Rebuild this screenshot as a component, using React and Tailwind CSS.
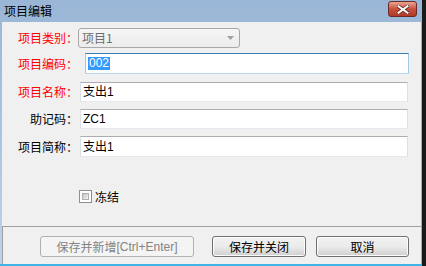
const cjk = { fontFamily: '"Noto Sans CJK SC", "Liberation Sans", sans-serif' }
const latin = { fontFamily: '"Liberation Sans", "Noto Sans CJK SC", sans-serif' }

function TextBox({ value, className = '' }) {
  return (
    <div
      className={`flex items-center h-[20px] w-[328px] bg-white border border-[#dbdfe6] border-t-[#abadb3] border-b-[#e3e9ef] pl-[2px] text-[12px] text-black ${className}`}
      style={latin}
    >
      {value}
    </div>
  )
}

function Button({ children, disabled, className = '' }) {
  if (disabled) {
    return (
      <div
        className={`flex items-center justify-center h-[21px] rounded-[3px] border border-[#adb2b5] bg-[#f4f4f4] text-[12px] text-[#838383] ${className}`}
        style={cjk}
      >
        {children}
      </div>
    )
  }
  return (
    <div
      className={`flex items-center justify-center h-[21px] rounded-[3px] border border-[#707070] bg-gradient-to-b from-[#f2f2f2] via-[#ebebeb] to-[#cfcfcf] shadow-[inset_0_0_0_1px_#fcfcfc] text-[12px] text-black ${className}`}
      style={cjk}
    >
      {children}
    </div>
  )
}

export default function App() {
  return (
    <div className="w-[426px] h-[266px] overflow-hidden bg-[#1a1a1a] relative" style={cjk}>
      {/* window */}
      <div className="w-[422px] h-[264px] flex flex-col bg-gradient-to-b from-[#9ab6d6] to-[#bcd3ea]">
        {/* title bar */}
        <div className="h-[22px] flex items-center justify-between pl-[4px] pr-[5px] shrink-0">
          <span className="text-[12px] text-black leading-none" style={cjk}>项目编辑</span>
          <div className="w-[29px] h-[16px] mt-[-4px] rounded-[3px] border border-[#6b2a24] bg-gradient-to-b from-[#e8a494] via-[#c7503d] to-[#b23a28] flex items-center justify-center">
            <svg width="12" height="9" viewBox="0 0 12 9">
              <path d="M1 1 L11 8 M11 1 L1 8" stroke="#5a2a20" strokeWidth="3.4" strokeLinecap="square" />
              <path d="M1.5 1.2 L10.5 7.8 M10.5 1.2 L1.5 7.8" stroke="#ffffff" strokeWidth="2" strokeLinecap="square" />
            </svg>
          </div>
        </div>

        {/* client area */}
        <div className="flex-1 flex ml-[2px] mr-0">
          <div className="flex-1 flex flex-col bg-[#f0f0f0]">
            {/* 项目类别 */}
            <div className="flex items-center mt-[6px] h-[20px]">
              <div className="w-[76px] text-right text-[12px] text-[#ff0000]">项目类别：</div>
              <div className="w-[162px] h-[20px] rounded-[3px] border border-[#a8a8a8] bg-gradient-to-b from-[#f6f6f6] to-[#ececec] flex items-center justify-between pl-[3px] pr-[5px]">
                <span className="text-[12px] text-[#6d6d6d]">项目1</span>
                <svg width="7" height="4" viewBox="0 0 7 4">
                  <path d="M0 0 H7 L3.5 4 Z" fill="#a0a0a0" />
                </svg>
              </div>
            </div>

            {/* 项目编码 */}
            <div className="flex items-center mt-[5px] h-[21px]">
              <div className="w-[76px] text-right text-[12px] text-[#ff0000]">项目编码：</div>
              <div className="ml-[7px] w-[324px] h-[21px] bg-white border border-[#a4c9e3] border-t-[#3c7fb1] border-b-[#b7d9ed] flex items-center pl-[2px]">
                <span className="bg-[#3399ff] text-white text-[12px] leading-[13px] px-[1px]" style={latin}>002</span>
              </div>
            </div>

            {/* 项目名称 */}
            <div className="flex items-center mt-[8px] h-[20px]">
              <div className="w-[76px] text-right text-[12px] text-[#ff0000]">项目名称：</div>
              <TextBox value="支出1" className="ml-[2px]" />
            </div>

            {/* 助记码 */}
            <div className="flex items-center mt-[7px] h-[20px]">
              <div className="w-[76px] text-right text-[12px] text-black">助记码：</div>
              <TextBox value="ZC1" className="ml-[2px]" />
            </div>

            {/* 项目简称 */}
            <div className="flex items-center mt-[7px] h-[21px]">
              <div className="w-[76px] text-right text-[12px] text-black">项目简称：</div>
              <TextBox value="支出1" className="ml-[2px] h-[21px]" />
            </div>

            {/* 冻结 */}
            <div className="flex items-center mt-[33px] h-[13px] pl-[77px]">
              <div className="w-[13px] h-[13px] border border-[#8e8f8f] bg-white p-[2px]">
                <div className="w-full h-full bg-gradient-to-br from-[#c6c6c6] to-[#f2f2f2] border border-[#b0b0b0]" />
              </div>
              <span className="ml-[3px] text-[12px] text-black">冻结</span>
            </div>

            {/* bottom button panel */}
            <div className="mt-[23px] flex-1 border-t border-l border-[#a0a0a0] flex items-start pt-[9px]">
              <Button disabled className="ml-[37px] w-[154px]">
                保存并新增<span style={latin}>[Ctrl+Enter]</span>
              </Button>
              <Button className="ml-[18px] w-[94px]">保存并关闭</Button>
              <Button className="ml-[10px] w-[93px]">取消</Button>
            </div>
          </div>
          <div className="w-[1px] bg-[#7cb8e2]" />
        </div>
      </div>
      {/* bottom frame edge */}
      <div className="h-[2px] w-[422px] bg-[#40b4e6]" />
    </div>
  )
}
